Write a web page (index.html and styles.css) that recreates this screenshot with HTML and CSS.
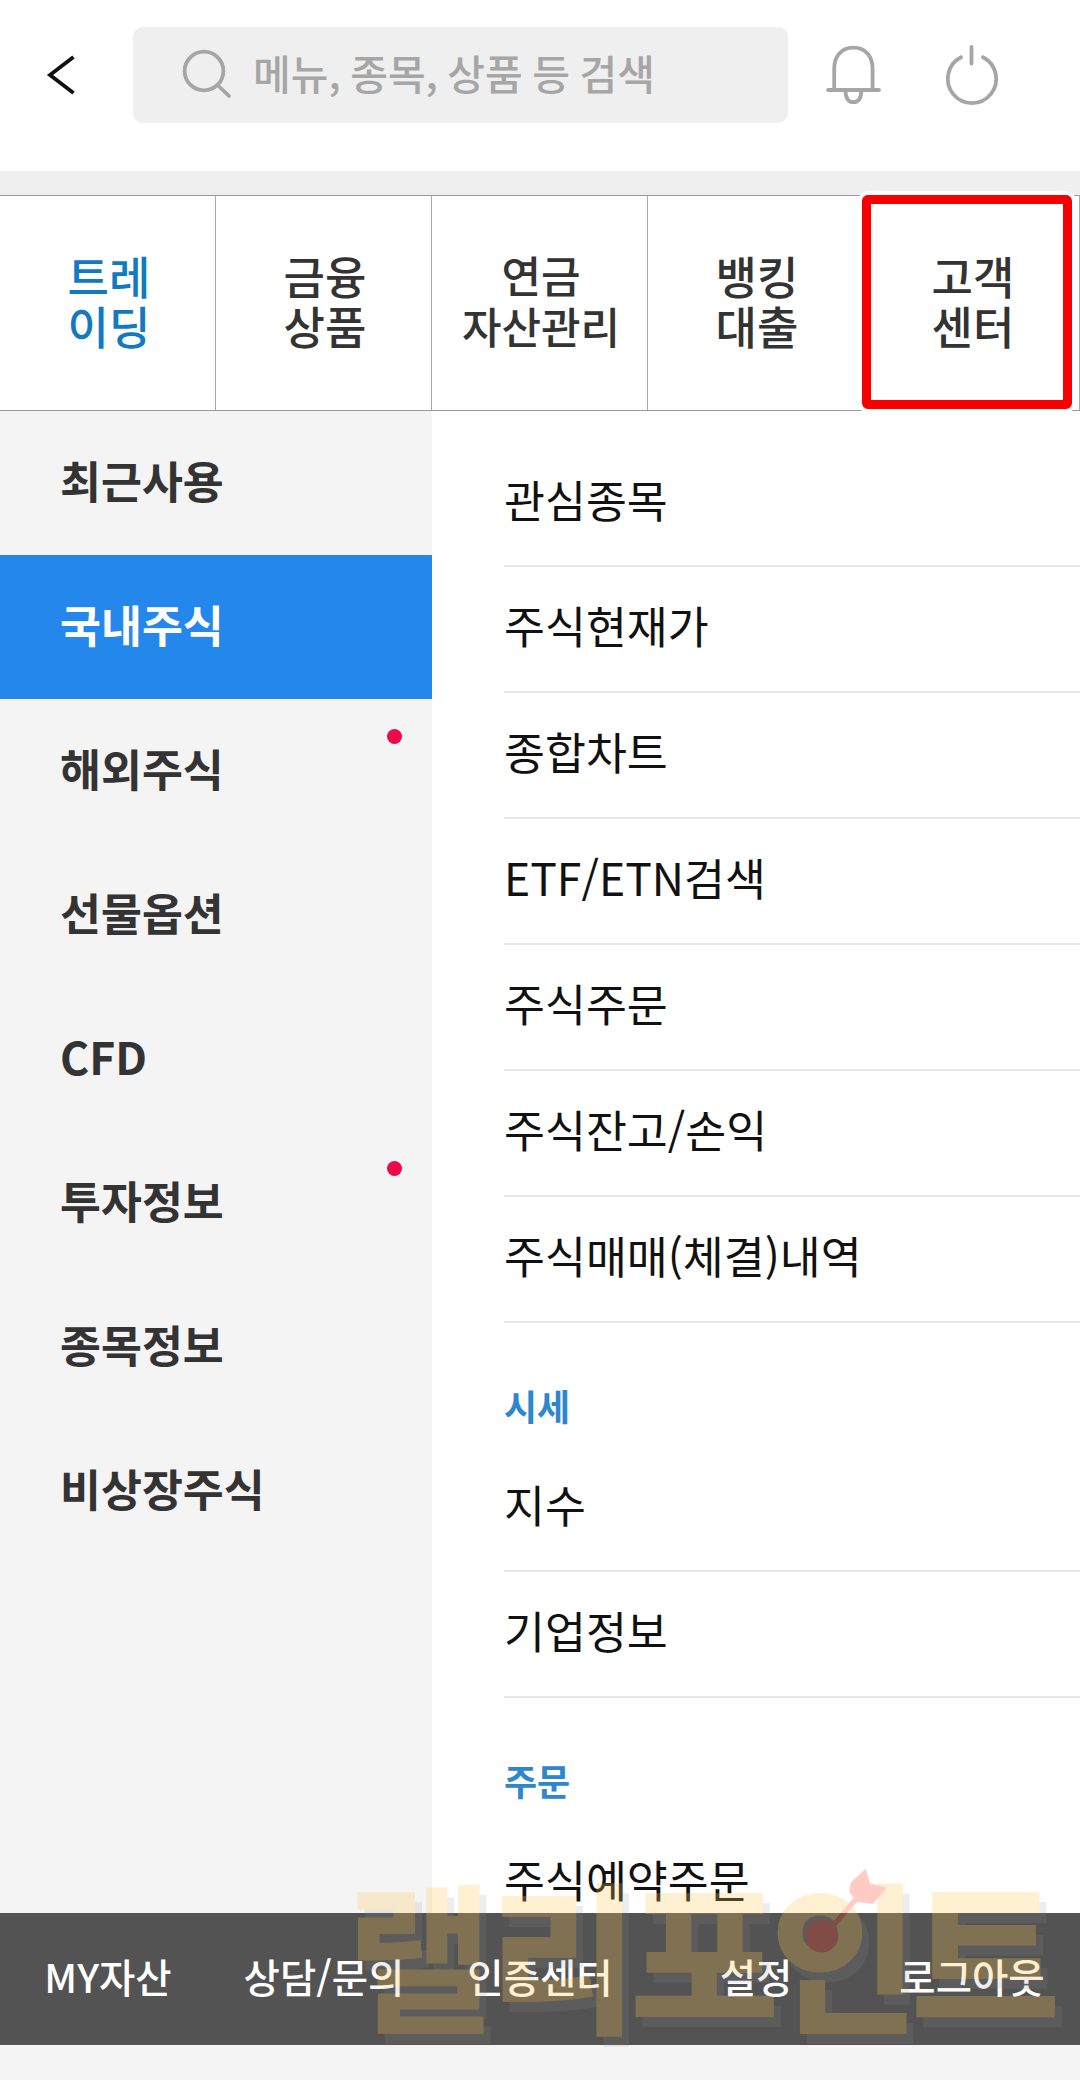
FILE: index.html
```html
<!DOCTYPE html>
<html lang="ko">
<head>
<meta charset="utf-8">
<title>전체메뉴</title>
<link rel="stylesheet" href="styles.css">
</head>
<body>
<div class="app">
  <header class="header">
    <svg class="back" width="32" height="48" viewBox="0 0 32 48"><path d="M28.500 6 5 24 28.500 42"/></svg>
    <div class="search">
      <svg class="icon" width="52" height="52" viewBox="0 0 52 52"><circle cx="24" cy="22" r="19.400"/><path d="M38 36.500 49 47"/></svg>
      <span>메뉴, 종목, 상품 등 검색</span>
    </div>
    <svg class="icon bell" width="60" height="64" viewBox="0 0 60 64"><path d="M11.200 47V27C11.200 14 18.500 5.600 30.400 5.600S49.600 14 49.600 27V47M5 48H56M22.500 48C22.500 56 25 60.200 30.400 60.200S38.300 56 38.300 48"/></svg>
    <svg class="icon power" width="60" height="64" viewBox="0 0 60 64"><path d="M19 15.300A24.200 24.200 0 1 0 41 15.300M29.500 5V21.500"/></svg>
  </header>
  <nav class="tabs">
    <div class="tab active"><span>트레<br>이딩</span></div>
    <div class="tab"><span>금융<br>상품</span></div>
    <div class="tab wide"><span>연금<br>자산관리</span></div>
    <div class="tab"><span>뱅킹<br>대출</span></div>
    <div class="tab"><span>고객<br>센터</span><i class="marker"></i></div>
  </nav>
  <main class="content">
    <aside class="sidebar">
      <div class="side">최근사용</div>
      <div class="side selected">국내주식</div>
      <div class="side">해외주식<i class="dot"></i></div>
      <div class="side">선물옵션</div>
      <div class="side">CFD</div>
      <div class="side">투자정보<i class="dot"></i></div>
      <div class="side">종목정보</div>
      <div class="side">비상장주식</div>
    </aside>
    <section class="list">
      <div class="row">관심종목</div>
      <div class="row">주식현재가</div>
      <div class="row">종합차트</div>
      <div class="row">ETF/ETN검색</div>
      <div class="row">주식주문</div>
      <div class="row">주식잔고/손익</div>
      <div class="row">주식매매(체결)내역</div>
      <h2 class="group">시세</h2>
      <div class="row">지수</div>
      <div class="row">기업정보</div>
      <h2 class="group">주문</h2>
      <div class="row">주식예약주문</div>
    </section>
  </main>
  <footer class="footer">
    <span>MY자산</span><span>상담/문의</span><span>인증센터</span><span>설정</span><span>로그아웃</span>
  </footer>
  <svg class="watermark" width="740" height="190" viewBox="340 1860 740 190">
    <g class="wm-text">
      <text class="dense" x="346" y="2020">랠</text>
      <text x="490" y="2020">리</text>
      <text x="631" y="2017">포</text>
      <text x="771" y="2020">인</text>
      <text x="912" y="2018">트</text>
    </g>
    <circle class="target" cx="821.700" cy="1936" r="16.500"/>
    <path class="shaft" d="M825 1935 856 1899"/>
    <path class="target" d="M865.700 1868.700 870 1883.300 886.700 1887.700 872.700 1904 856.700 1902 849.300 1891.700 850.700 1882.700Z"/>
  </svg>
</div>
</body>
</html>
```
FILE: styles.css
```css
* { box-sizing: border-box; }
body {
  margin: 0;
  background: #f4f4f4;
  font-family: "Noto Sans CJK KR", sans-serif;
}
.app {
  position: relative;
  width: 1080px;
  height: 2080px;
  overflow: hidden;
  display: flex;
  flex-direction: column;
}
svg { fill: none; flex: none; }

.header {
  height: 195px;
  padding: 27px 0 0 45px;
  display: flex;
  align-items: flex-start;
  background: #fff;
  border-bottom: 24px solid #efefef;
}
.back { margin: 24px 56px 0 0; stroke: #111; stroke-width: 3.8; }
.search {
  width: 655px;
  height: 96px;
  padding-left: 47px;
  display: flex;
  align-items: center;
  gap: 21px;
  border-radius: 10px;
  background: #efefef;
  color: #a6a6a6;
  font-size: 41px;
  font-weight: 500;
  white-space: nowrap;
  word-spacing: -2px;
}
.search span { line-height: 60px; margin-top: -6px; }
.icon { stroke: #a6a6a6; stroke-width: 3.8; stroke-linecap: round; }
.bell { margin: 15px 0 0 35px; }
.power { margin: 15px 0 0 59px; }

.tabs {
  height: 216px;
  display: flex;
  background: #fff;
  border-top: 1px solid #999;
  border-bottom: 1px solid #999;
}
.tab {
  position: relative;
  flex: 1;
  display: flex;
  align-items: center;
  justify-content: center;
  padding: 0 0 4px 3px;
  border-right: 1px solid #aaa;
  color: #333;
  font-size: 45px;
  font-weight: 500;
  line-height: 50px;
  text-align: center;
}
.tab.active { color: #127ac0; }
.tab.wide { padding-bottom: 6px; font-size: 43px; line-height: 51px; }
.marker {
  position: absolute;
  left: -2px;
  top: -1px;
  width: 210px;
  height: 214px;
  border: 9px solid #f60000;
  border-radius: 6px;
  box-shadow: 0 0 0 4px #fff;
}

.content { height: 1502px; display: flex; overflow: hidden; }
.sidebar { width: 432px; background: #f4f4f4; }
.side {
  position: relative;
  height: 144px;
  padding: 0 0 8px 60px;
  display: flex;
  align-items: center;
  color: #333;
  font-size: 44.500px;
  font-weight: 700;
}
.side.selected { background: #2387ec; color: #fff; }
.dot {
  position: absolute;
  left: 387px;
  top: 30px;
  width: 15px;
  height: 15px;
  border-radius: 50%;
  background: #eb0b4a;
}
.list { flex: 1; padding: 30px 0 0 72px; background: #fff; }
.row {
  height: 126px;
  padding-bottom: 8px;
  display: flex;
  align-items: center;
  border-bottom: 2px solid #e7e7e7;
  color: #111;
  font-size: 44.500px;
  line-height: 60px;
  white-space: nowrap;
}
.group {
  height: 123px;
  margin: 0;
  padding-top: 55px;
  color: #2e86cf;
  font-size: 36px;
  font-weight: 700;
  line-height: 54px;
}
.footer {
  height: 132px;
  padding: 0 0 8px;
  display: grid;
  grid-template-columns: repeat(5, 1fr);
  align-items: center;
  background: #535353;
  color: #fff;
  font-size: 39.500px;
  font-weight: 500;
  text-align: center;
}

.watermark { position: absolute; left: 340px; top: 1860px; opacity: .26; }
.wm-text {
  fill: #ffc952;
  stroke: #ffc952;
  stroke-width: 4;
  font-size: 160px;
  font-weight: 700;
  filter: drop-shadow(7px 10px 0 rgba(145, 145, 145, .6));
}
.wm-text .dense { stroke-width: 1; }
.target { fill: #ff3a24; }
.shaft { stroke: #ff3a24; stroke-width: 5; }
```
